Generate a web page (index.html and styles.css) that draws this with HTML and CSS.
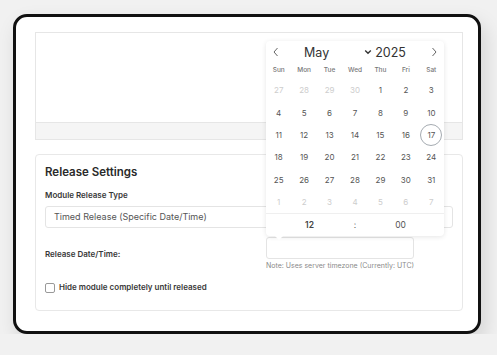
FILE: index.html
```html
<!DOCTYPE html>
<html lang="en">

<head>
    <meta charset="UTF-8">
    <meta name="viewport" content="width=device-width, initial-scale=1.0">
    <title>Release Settings</title>
    <link rel="stylesheet" href="styles.css">
</head>

<body>
    <div class="frame">
        <div class="preview">
            <div class="preview-body"></div>
            <div class="preview-footer"></div>
        </div>

        <div class="panel">
            <p class="panel-title">Release Settings</p>

            <label class="field-label" for="releaseType">Module Release Type</label>
            <div class="select-box" id="releaseType">Timed Release (Specific Date/Time)</div>

            <div class="date-row">
                <label class="field-label date-label" for="releaseDate">Release Date/Time:</label>
                <div class="date-field">
                    <div class="calendar">
                        <div class="cal-head">
                            <svg class="cal-nav" width="8" height="10" viewBox="0 0 8 10">
                                <path d="M5.5 1 L2 5 L5.5 9" fill="none" stroke="#666" stroke-width="1"/>
                            </svg>
                            <span class="cal-month">May</span>
                            <svg class="cal-caret" width="8" height="6" viewBox="0 0 8 6">
                                <path d="M1.2 1.5 L4 4.3 L6.8 1.5" fill="none" stroke="#333" stroke-width="1.4"/>
                            </svg>
                            <span class="cal-year">2025</span>
                            <svg class="cal-nav cal-next" width="8" height="10" viewBox="0 0 8 10">
                                <path d="M2.5 1 L6 5 L2.5 9" fill="none" stroke="#666" stroke-width="1"/>
                            </svg>
                        </div>
                        <div class="cal-weekdays">
                            <span>Sun</span><span>Mon</span><span>Tue</span><span>Wed</span><span>Thu</span><span>Fri</span><span>Sat</span>
                        </div>
                        <div class="cal-days" id="days"></div>
                        <div class="cal-time">
                            <span class="cal-hour">12</span>
                            <span class="cal-sep">:</span>
                            <span class="cal-min">00</span>
                        </div>
                    </div>
                    <div class="date-input" id="releaseDate"></div>
                    <p class="note">Note: Uses server timezone (Currently: UTC)</p>
                </div>
            </div>

            <label class="check-row">
                <span class="check-box"></span>
                Hide module completely until released
            </label>
        </div>
    </div>

    <script>
        // build the May 2025 grid (starts on Thursday)
        let grid = document.getElementById("days");
        let days = [];
        [27, 28, 29, 30].forEach(d => days.push({ n: d, other: true }));
        for (let d = 1; d <= 31; d++) days.push({ n: d });
        for (let d = 1; d <= 7; d++) days.push({ n: d, other: true });

        days.forEach(day => {
            let cell = document.createElement("span");
            cell.className = "cal-day";
            if (day.other) cell.classList.add("other");
            if (!day.other && day.n === 17) cell.classList.add("today");
            cell.textContent = day.n;
            grid.appendChild(cell);
        });
    </script>
</body>

</html>
```

FILE: styles.css
```css
body {
    font-family: Inter, "Noto Sans", sans-serif;
    background-color: #f1f1f1;
    margin: 0;
    padding: 14px 0 0 13px;
    color: #333;
}

.frame {
    width: 468px;
    height: 320px;
    box-sizing: border-box;
    background-color: #fff;
    border: 3px solid #111;
    border-radius: 14px;
    padding: 15px 15px 0 19px;
    box-shadow: 4px 9px 20px rgba(0, 0, 0, 0.13);
}

.preview {
    border: 1px solid #e6e6e6;
    height: 108px;
    box-sizing: border-box;
    display: flex;
    flex-direction: column;
}

.preview-body {
    flex: 1;
}

.preview-footer {
    height: 16px;
    background-color: #f5f5f5;
    border-top: 1px solid #e6e6e6;
}

.panel {
    margin-top: 14px;
    border: 1px solid #e8e8e8;
    border-radius: 4px;
    height: 157px;
    box-sizing: border-box;
    padding: 9px 9px 0 9px;
}

.panel-title {
    margin: 0;
    font-size: 11.5px;
    font-weight: 600;
    line-height: 16px;
    color: #2a2a2a;
}

.field-label {
    display: block;
    font-size: 8px;
    font-weight: 600;
    line-height: 11px;
    color: #383838;
    margin-top: 10px;
}

.select-box {
    margin-top: 5px;
    height: 22px;
    box-sizing: border-box;
    border: 1px solid #e4e4e4;
    border-radius: 3px;
    padding-left: 8px;
    font-size: 9px;
    line-height: 20px;
    color: #555;
}

.date-row {
    display: flex;
    margin-top: 9px;
}

.date-label {
    width: 221px;
    margin-top: 12px;
    flex-shrink: 0;
}

.date-field {
    position: relative;
    width: 148px;
}

.date-input {
    height: 22px;
    box-sizing: border-box;
    border: 1px solid #e4e4e4;
    border-radius: 3px;
}

.note {
    margin: 2px 0 0;
    font-size: 7px;
    line-height: 9px;
    color: #8a8a8a;
    white-space: nowrap;
}

.check-row {
    display: flex;
    align-items: center;
    gap: 4px;
    margin-top: 12px;
    font-size: 8px;
    font-weight: 600;
    line-height: 11px;
    color: #383838;
}

.check-box {
    width: 8px;
    height: 8px;
    border: 1px solid #999;
    border-radius: 2px;
}

/* calendar popup */
.calendar {
    position: absolute;
    left: 0;
    bottom: calc(100% + 1px);
    width: 178px;
    height: 195px;
    background-color: #fff;
    border-radius: 4px;
    box-shadow: 0 1px 5px rgba(0, 0, 0, 0.1);
    display: flex;
    flex-direction: column;
}

.calendar::after {
    content: "";
    position: absolute;
    left: 9px;
    bottom: -4px;
    border-left: 4px solid transparent;
    border-right: 4px solid transparent;
    border-top: 4px solid #fff;
}

.cal-head {
    height: 22px;
    display: flex;
    align-items: center;
    position: relative;
}

.cal-nav {
    position: absolute;
    left: 6px;
    top: 6px;
}

.cal-next {
    left: auto;
    right: 6px;
}

.cal-month {
    margin-left: 38px;
    font-size: 12.5px;
    color: #333;
}

.cal-caret {
    margin-left: 35px;
}

.cal-year {
    margin-left: 3px;
    font-size: 12.5px;
    color: #333;
}

.cal-weekdays {
    height: 14px;
    display: grid;
    grid-template-columns: repeat(7, 1fr);
    align-items: center;
    text-align: center;
    font-size: 6.5px;
    font-weight: 500;
    color: #777;
}

.cal-days {
    margin-top: 2px;
    display: grid;
    grid-template-columns: repeat(7, 1fr);
    grid-auto-rows: 22.4px;
    align-items: center;
    justify-items: center;
}

.cal-day {
    width: 22px;
    height: 22px;
    box-sizing: border-box;
    border-radius: 50%;
    display: flex;
    align-items: center;
    justify-content: center;
    font-size: 8px;
    color: #555;
}

.cal-day.other {
    color: #cdcdcd;
}

.cal-day.today {
    border: 1px solid #a5abb1;
}

.cal-time {
    flex: 1;
    border-top: 1px solid #efefef;
    display: grid;
    grid-template-columns: 1fr auto 1fr;
    align-items: center;
    text-align: center;
    font-size: 8.5px;
    color: #555;
}

.cal-hour {
    font-weight: 600;
    color: #444;
}

.cal-sep {
    width: 4px;
}
```
